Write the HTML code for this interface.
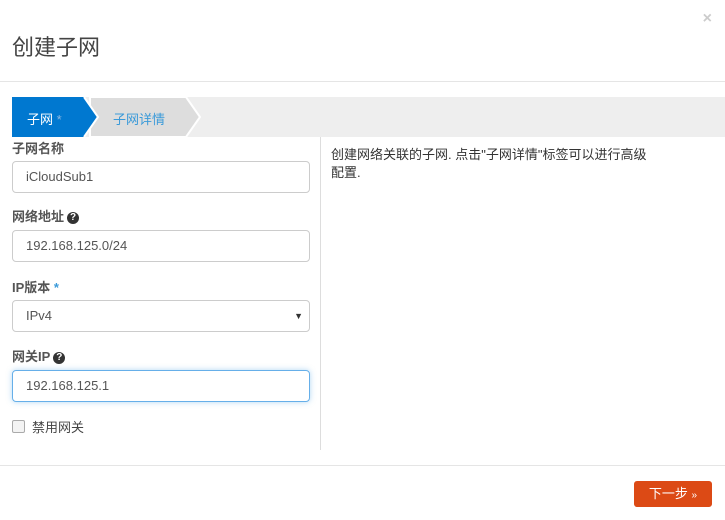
<!DOCTYPE html><html><head><meta charset="utf-8"><style>
body{margin:0;width:725px;height:520px;background:#fff;font-family:"Liberation Sans","Noto Sans CJK SC",sans-serif;position:relative;overflow:hidden;color:#333}
.a{position:absolute}
.title{left:12px;top:30px;font-size:22px;color:#444}
.x{right:13px;top:10px;font-size:16px;color:#ccc;font-weight:bold}
.lbl{left:12px;font-size:13px;font-weight:bold;color:#555}
.inp{left:12px;height:30px;border:1px solid #ccc;border-radius:4px;font-size:13px;color:#555;line-height:30px;padding-left:13px;box-sizing:content-box;width:283px}
.q{display:inline-block;width:12px;height:12px;border-radius:50%;background:#333;color:#fff;font-size:10px;line-height:12px;text-align:center;vertical-align:1px;margin-left:3px}
</style></head><body>
<div class="a title">创建子网</div>
<div class="a x">×</div>
<div class="a" style="left:0;top:81px;width:725px;height:1px;background:#e5e5e5"></div>
<div class="a" style="left:12px;top:97px;width:713px;height:40px;background:#eee"></div>
<svg class="a" style="left:12px;top:97px" width="190" height="40">
<polygon points="78,0 174,0 188,20 174,40 78,40" fill="#ddd" stroke="#fff" stroke-width="2"/>
<polygon points="0,0 72,0 86,20 72,40 0,40" fill="#0078d0"/>
<polyline points="72,0 86,20 72,40" fill="none" stroke="#fff" stroke-width="2"/>
</svg>
<div class="a" style="left:27px;top:109px;font-size:13px;color:#fff">子网 <span style="color:#8fb8e0">*</span></div>
<div class="a" style="left:113px;top:109px;font-size:13px;color:#3a9ad9">子网详情</div>
<div class="a" style="left:320px;top:137px;width:1px;height:313px;background:#ddd"></div>
<div class="a lbl" style="top:138px">子网名称</div>
<div class="a inp" style="top:161px">iCloudSub1</div>
<div class="a lbl" style="top:206px">网络地址<span class="q">?</span></div>
<div class="a inp" style="top:230px">192.168.125.0/24</div>
<div class="a lbl" style="top:277px">IP版本 <span style="color:#3a9ad9">*</span></div>
<div class="a inp" style="top:300px">IPv4<span style="position:absolute;right:6px;font-size:9px;color:#333">▼</span></div>
<div class="a lbl" style="top:346px">网关IP<span class="q">?</span></div>
<div class="a inp" style="top:370px;border-color:#66afe9;box-shadow:0 0 6px rgba(102,175,233,.5)">192.168.125.1</div>
<div class="a" style="left:12px;top:420px;width:11px;height:11px;border:1px solid #aaa;border-radius:2px;background:#f3f3f3"></div>
<div class="a" style="left:32px;top:417px;font-size:13px;color:#444">禁用网关</div>
<div class="a" style="left:331px;top:146px;font-size:13px;line-height:18px;color:#333;width:330px">创建网络关联的子网. 点击"子网详情"标签可以进行高级<br>配置.</div>
<div class="a" style="left:0;top:465px;width:725px;height:1px;background:#e5e5e5"></div>
<div class="a" style="left:634px;top:481px;width:78px;height:26px;background:#dc4a15;border-radius:3px;color:#fff;font-size:13px;line-height:26px;text-align:center">下一步 <span style="font-size:10px">»</span></div>
</body></html>
